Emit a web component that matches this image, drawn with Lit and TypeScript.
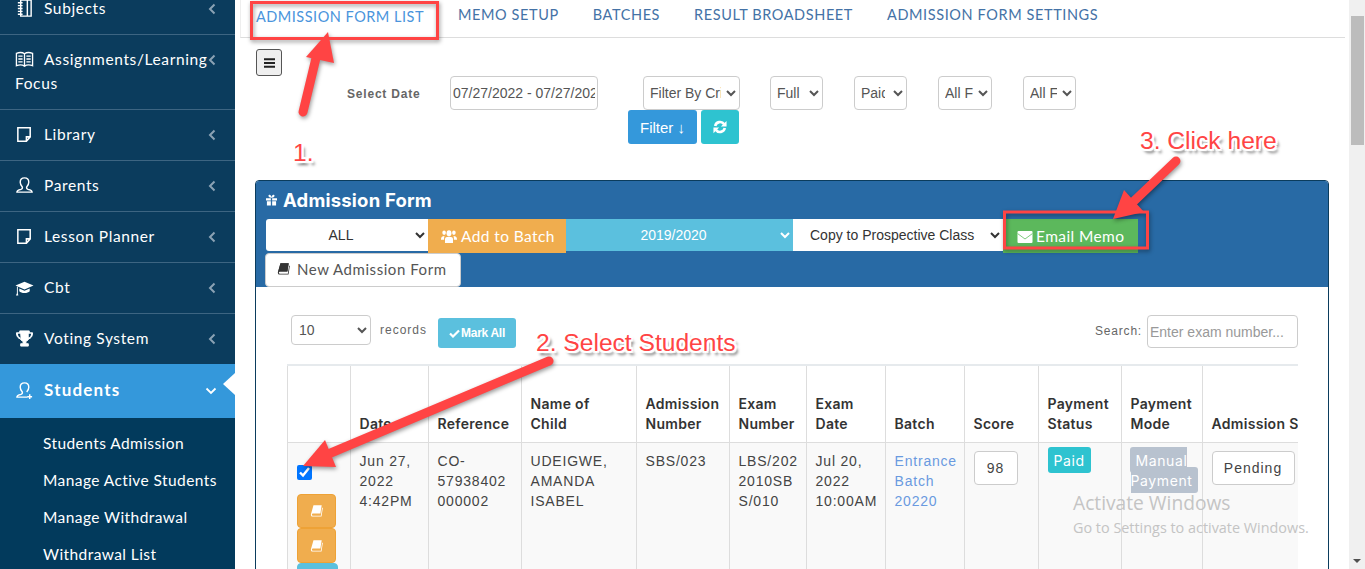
import { LitElement, html, css, svg } from 'lit'
import { customElement } from 'lit/decorators.js'

// line icons for the sidebar, 20x20 box
const icons: Record<string, unknown> = {
	notebook: svg`<path d="M6 1h11v17H6zM13 1v17M3 4h5M3 7h5M3 10h5M3 13h5M3 16h5" fill="none" stroke="#fff" stroke-width="1.5"/>`,
	book: svg`<path d="M10 4C8 2.500 4 2.500 1.500 3.500V16.500C4 15.500 8 15.500 10 17 12 15.500 16 15.500 18.500 16.500V3.500C16 2.500 12 2.500 10 4ZM10 4V17M3.500 6.500h4.500M3.500 9.500h4.500M3.500 12.500h4.500M12 6.500h4.500M12 9.500h4.500M12 12.500h4.500" fill="none" stroke="#fff" stroke-width="1.400"/>`,
	note: svg`<path d="M3 3h13v9.500L12 17H3zM12 17v-4.500h4" fill="none" stroke="#fff" stroke-width="1.600"/>`,
	user: svg`<path d="M10 2c-3 0-4.500 2-4.500 4.500 0 2 1 3.700 2.200 5 .3 1-.2 2-1.500 2.500-2 .7-4.200 1-4.200 3h16c0-2-2.200-2.300-4.200-3-1.300-.5-1.800-1.500-1.500-2.500 1.200-1.300 2.200-3 2.200-5C14.500 4 13 2 10 2Z" fill="none" stroke="#fff" stroke-width="1.500"/>`,
	userPlus: svg`<path d="M10 2c-3 0-4.500 2-4.500 4.500 0 2 1 3.700 2.200 5 .3 1-.2 2-1.500 2.500-2 .7-4.200 1-4.200 3h11M12.300 11.500c1.200-1.300 2.200-3 2.200-5C14.500 4 13 2 10 2M15.500 14v5M13 16.500h5" fill="none" stroke="#fff" stroke-width="1.500"/>`,
	cap: svg`<path d="M10 4 .5 8 10 12l9.500-4ZM4.500 11v3c2 2.500 9 2.500 11 0v-3L10 13.500ZM2 9v7l-1 2.500h2.500L3 16V9.500Z" fill="#fff"/>`,
	trophy: svg`<path d="M5 2h10v6c0 3-2 4.500-3.500 5v2.500H14V18H6v-2.500h2.500V13C7 12.500 5 11 5 8ZM5 4H1.500c0 3.500 1.500 6 4.500 6.500M15 4h3.500c0 3.500-1.500 6-4.500 6.500" fill="#fff" stroke="#fff" stroke-width="1" fill-rule="nonzero"/><path d="M3 5h2.500v4C4 8.500 3.200 7 3 5ZM17 5h-2.500v4c1.500-.5 2.300-2 2.500-4Z" fill="#0b3c5d"/>`,
}

const icon = (name: string) => html`<svg class="nav-icon" viewBox="0 0 20 20">${icons[name]}</svg>`

const chevronLeft = html`<svg class="chev" viewBox="0 0 8 12"><path d="M6.500 1.500 2 6l4.500 4.500" fill="none" stroke="#8ba2b4" stroke-width="2"/></svg>`
const chevronDown = html`<svg class="chev chev-down" viewBox="0 0 12 8"><path d="M1.500 1.500 6 6l4.500-4.500" fill="none" stroke="#fff" stroke-width="1.800"/></svg>`

const bookBtn = svg`<path d="M4 1.500h9.500L12 11H3a1.500 1.500 0 0 0-.8 1.600c.1.500.5.900 1 .9h9.300l1.500-9.500.8.700-1.500 9.800H3C1.500 14.500 1 13.200 1 12Z" fill="#fff"/>`
const bookDark = svg`<path d="M4 1.500h9.500L12 11H3a1.500 1.500 0 0 0-.8 1.600c.1.500.5.900 1 .9h9.300l1.500-9.500.8.700-1.500 9.800H3C1.500 14.500 1 13.200 1 12Z" fill="#333"/><path d="M4 1.500h9.500L12 11H3L1 12Z" fill="#333"/>`

const navItems = [
	{ label: 'Subjects', icon: 'notebook' },
	{ label: 'Assignments/Learning Focus', icon: 'book' },
	{ label: 'Library', icon: 'note' },
	{ label: 'Parents', icon: 'user' },
	{ label: 'Lesson Planner', icon: 'note' },
	{ label: 'Cbt', icon: 'cap' },
	{ label: 'Voting System', icon: 'trophy' },
]

const subItems = ['Students Admission', 'Manage Active Students', 'Manage Withdrawal', 'Withdrawal List']

const tabs = ['MEMO SETUP', 'BATCHES', 'RESULT BROADSHEET', 'ADMISSION FORM SETTINGS']

const colWidths = [63, 78, 93, 115, 93, 77, 79, 79, 74, 83, 81, 120]

@customElement('app-root')
export class AppRoot extends LitElement {
	static styles = css`
		:host {
			display: block;
			position: relative;
			height: 569px;
			overflow: hidden;
			background: #fff;
			font-family: 'Liberation Sans', Arial, sans-serif;
			color: #333;
		}

		.page {
			display: flex;
			width: 1365px;
			height: 569px;
			overflow: hidden;
		}

		/* sidebar */
		.sidebar {
			flex: none;
			width: 235px;
			height: 569px;
			overflow: hidden;
			background: #0b3c5d;
			font-family: Lato, 'Noto Sans', sans-serif;
			color: #fff;
		}

		.nav {
			margin-top: -16px;
		}

		.nav-item {
			position: relative;
			padding: 12px 20px 14px 15px;
			border-bottom: 1px solid #3d6582;
			font-size: 15.500px;
			line-height: 24px;
			letter-spacing: 0.62px;
		}

		.nav-item:nth-child(7) {
			border-bottom: 0;
		}

		.nav-icon {
			display: inline-block;
			width: 19px;
			height: 19px;
			margin-right: 10px;
			vertical-align: -4px;
		}

		.chev {
			position: absolute;
			top: 19px;
			right: 19px;
			width: 8px;
			height: 12px;
		}

		.chev-down {
			top: 23px;
			right: 18px;
			width: 12px;
			height: 8px;
		}

		.nav-item.active {
			height: 54px;
			box-sizing: border-box;
			padding-top: 14px;
			background: #3498db;
			border-bottom: 0;
			font-size: 17px;
			font-weight: 700;
			letter-spacing: 1.2px;
		}

		.notch {
			position: absolute;
			top: 9px;
			right: 0;
			border-style: solid;
			border-width: 11px 12px 11px 0;
			border-color: transparent #fff transparent transparent;
		}

		.sub {
			height: 200px;
			padding-top: 7px;
			background: #023a5c;
			font-size: 15.500px;
		}

		.sub-item {
			padding-left: 43px;
			line-height: 37px;
			letter-spacing: 0.42px;
			white-space: nowrap;
		}

		/* main column */
		.main {
			flex: none;
			width: 1109px;
			margin-left: 5px;
			overflow: hidden;
		}

		.tabs {
			display: flex;
			width: 1104px;
			height: 37px;
			box-sizing: content-box;
			border-bottom: 1px solid #ddd;
			border-left: 1px solid #eee;
			font-family: Lato, 'Noto Sans', sans-serif;
			font-size: 14.500px;
			letter-spacing: 0.6px;
			color: #4472a6;
			white-space: nowrap;
		}

		.tab {
			margin-left: 34px;
			line-height: 29px;
		}

		.tab.current {
			margin-left: 15px;
			line-height: 33px;
			letter-spacing: 0.5px;
			color: #4a94dc;
		}

		.content {
			margin-left: 15px;
		}

		.menu-btn {
			display: flex;
			align-items: center;
			justify-content: center;
			width: 26px;
			height: 27px;
			box-sizing: border-box;
			margin: 11px 0 0 1px;
			padding: 0;
			border: 1px solid #555;
			border-radius: 3px;
			background: #efefef;
		}

		.menu-btn svg {
			width: 11px;
			height: 10px;
		}

		.filters {
			display: flex;
			align-items: center;
			gap: 30px;
			height: 34px;
		}

		.date-label {
			width: 73px;
			margin: 2px 0 0 92px;
			font-size: 12px;
			font-weight: 700;
			letter-spacing: 0.8px;
			color: #666;
			white-space: nowrap;
		}

		.field {
			box-sizing: border-box;
			height: 34px;
			padding: 0 2px;
			border: 1px solid #ccc;
			border-radius: 4px;
			background: #fff;
			font: 14px 'Liberation Sans', Arial, sans-serif;
			color: #555;
		}

		.date {
			width: 148px;
			margin-right: 15px;
		}

		.sel-crit {
			width: 97px;
		}

		.sel-a {
			width: 53px;
		}

		.sel-b {
			width: 53px;
			margin-left: 1px;
			padding-right: 5px;
		}

		.sel-c {
			width: 54px;
			margin-left: 1px;
		}

		.sel-d {
			width: 53px;
			margin-left: 1px;
		}

		.filter-btns {
			display: flex;
			gap: 4px;
			margin-left: 373px;
		}

		.btn {
			display: flex;
			align-items: center;
			justify-content: center;
			height: 34px;
			box-sizing: border-box;
			padding: 0;
			border: 0;
			border-radius: 3px;
			font: 15px 'Liberation Sans', Arial, sans-serif;
			color: #fff;
		}

		.btn-filter {
			width: 69px;
			background: #3498db;
		}

		.btn-refresh {
			width: 38px;
			background: #2ec3d0;
		}

		.btn-refresh svg {
			width: 14px;
			height: 14px;
		}

		/* panel */
		.panel {
			width: 1074px;
			box-sizing: border-box;
			margin-top: 36px;
			border: 1px solid #0b3c5d;
			border-radius: 4px;
			overflow: hidden;
		}

		.panel-head {
			height: 106px;
			box-sizing: border-box;
			padding: 7px 0 0 10px;
			background: #286aa5;
		}

		.panel-title {
			display: flex;
			align-items: center;
			gap: 6px;
			height: 24px;
			margin-bottom: 7px;
			font-family: Inter, Roboto, sans-serif;
			font-size: 18.500px;
			font-weight: 700;
			letter-spacing: 0.2px;
			color: #fff;
		}

		.panel-title svg {
			width: 11px;
			height: 12px;
		}

		.actions {
			display: flex;
			align-items: flex-start;
		}

		.act-select {
			height: 32px;
			box-sizing: border-box;
			border: 0;
			border-radius: 0;
			font: 14px 'Liberation Sans', Arial, sans-serif;
			color: #333;
			background: #fff;
			text-align: center;
		}

		.act-all {
			width: 162px;
			border-radius: 3px 0 0 3px;
		}

		.act-session {
			width: 227px;
			background: #5bc0de;
			color: #fff;
		}

		.act-copy {
			width: 210px;
			padding-left: 13px;
			text-align: left;
		}

		.act-btn {
			display: flex;
			align-items: center;
			gap: 4px;
			height: 34px;
			box-sizing: border-box;
			padding: 0;
			border: 0;
			font-family: Lato, 'Noto Sans', sans-serif;
			font-size: 15.500px;
			letter-spacing: 0.4px;
			color: #fff;
		}

		.act-batch {
			width: 138px;
			padding-left: 13px;
			background: #f0ad4e;
		}

		.act-email {
			width: 135px;
			padding-left: 14px;
			gap: 3px;
			background: #5cb85c;
		}

		.act-btn svg {
			width: 16px;
			height: 15px;
		}

		.act-email svg {
			height: 12px;
			margin-top: 2px;
		}

		.new-form {
			display: flex;
			align-items: center;
			gap: 7px;
			width: 196px;
			height: 34px;
			box-sizing: border-box;
			margin-left: -1px;
			padding: 0 0 3px 11px;
			border: 1px solid #ccc;
			border-radius: 4px;
			background: #fff;
			font-family: Lato, 'Noto Sans', sans-serif;
			font-size: 15px;
			letter-spacing: 0.55px;
			color: #555;
		}

		.new-form svg {
			width: 13px;
			height: 13px;
		}

		.panel-body {
			padding: 28px 30px 0 31px;
			height: 300px;
		}

		.toolbar {
			display: flex;
			align-items: flex-start;
			height: 49px;
			margin-left: 4px;
		}

		.len-select {
			width: 80px;
			height: 30px;
			padding: 0 3px;
		}

		.records {
			margin: 7px 0 0 9px;
			font-size: 12px;
			line-height: 16px;
			letter-spacing: 1px;
			color: #666;
		}

		.mark-all {
			display: flex;
			align-items: center;
			justify-content: center;
			gap: 1px;
			width: 78px;
			height: 30px;
			margin: 3px 0 0 11px;
			padding: 0;
			border: 0;
			border-radius: 3px;
			background: #5bc0de;
			font: 700 12px 'Liberation Sans', Arial, sans-serif;
			letter-spacing: -0.3px;
			color: #fff;
		}

		.mark-all svg {
			width: 11px;
			height: 9px;
		}

		.search {
			display: flex;
			align-items: flex-start;
			gap: 5px;
			margin-left: auto;
			font-size: 12px;
			letter-spacing: 0.8px;
			color: #666;
		}

		.search span {
			margin-top: 9px;
		}

		.search input {
			width: 151px;
			height: 33px;
			letter-spacing: 0;
		}

		.search input::placeholder {
			color: #999;
		}

		.table-wrap {
			width: 1011px;
			overflow: hidden;
			border-top: 2px solid #e6eaed;
		}

		table {
			table-layout: fixed;
			width: 1035px;
			border-collapse: collapse;
		}

		th,
		td {
			box-sizing: border-box;
			padding: 8px 4px 8px 8.500px;
			border: 1px solid #ddd;
			overflow: hidden;
			text-align: left;
			vertical-align: top;
		}

		tr:first-child th {
			border-top: 0;
		}

		th {
			height: 76px;
			vertical-align: bottom;
			font-family: Inter, Roboto, sans-serif;
			font-size: 14px;
			font-weight: 600;
			line-height: 20px;
			letter-spacing: 0.3px;
			color: #333;
		}

		td {
			height: 140px;
			background: #f9f9f9;
			font-size: 14px;
			line-height: 20px;
			letter-spacing: 0.8px;
			color: #444;
			white-space: nowrap;
		}

		th.nowrap {
			white-space: nowrap;
		}

		.check {
			display: block;
			width: 15px;
			height: 15px;
			margin: 14px 0 14px 0;
			accent-color: #0075ff;
		}

		.row-btn {
			display: flex;
			align-items: center;
			justify-content: center;
			width: 39px;
			height: 34.500px;
			padding: 0;
			box-sizing: border-box;
			border: 1px solid #eea236;
			border-radius: 4px;
			background: #f0ad4e;
		}

		.row-btn svg {
			width: 13px;
			height: 13px;
		}

		.row-btn.info {
			width: 41px;
			border-color: #5bc0de;
			background: #5bc0de;
		}

		td.link {
			color: #6a9ae0;
			white-space: normal;
		}

		td.wrap {
			white-space: normal;
		}

		.mini {
			display: block;
			box-sizing: border-box;
			height: 34px;
			border: 1px solid #ccc;
			border-radius: 4px;
			background: #fff;
			font: 14px 'Liberation Sans', Arial, sans-serif;
			letter-spacing: 1px;
			color: #444;
			text-align: center;
			line-height: 32px;
		}

		.score {
			width: 44px;
		}

		.pending {
			width: 83px;
		}

		/* inline labels: padding is sliced across the wrapped lines */
		.label {
			padding: 5px 6px 4px;
			border-radius: 3px;
			font-family: Inter, Roboto, sans-serif;
			font-size: 14px;
			letter-spacing: 0.6px;
			color: #fff;
		}

		.label-paid {
			background: #2ec3d0;
		}

		.label-mode {
			margin-left: -1px;
			background: #b8c2cf;
		}

		/* scrollbar */
		.scrollbar {
			flex: none;
			position: relative;
			width: 16px;
			height: 569px;
			background: #f0f0f0;
		}

		.thumb {
			height: 129px;
			margin: 16px 1px 0 2px;
			background: #bcbcbc;
		}

		.scroll-down {
			position: absolute;
			right: 4px;
			bottom: 6px;
			border-style: solid;
			border-width: 4px 4px 0;
			border-color: #505050 transparent transparent;
		}

		/* annotations drawn over the page */
		.marks {
			position: absolute;
			left: 0;
			top: 0;
			width: 1365px;
			height: 569px;
			pointer-events: none;
			filter: drop-shadow(1px 2px 2px rgba(0, 0, 0, 0.4));
		}

		.callout {
			position: absolute;
			font-family: 'Liberation Sans', Arial, sans-serif;
			font-size: 24.600px;
			line-height: 28px;
			color: #ff4444;
			white-space: nowrap;
			text-shadow:
				-1px -1px 0 #fff,
				1px -1px 0 #fff,
				-1px 1px 0 #fff,
				1px 1px 0 #fff,
				0 -2px 0 #fff,
				0 2px 0 #fff,
				-2px 0 0 #fff,
				2px 0 0 #fff,
				-2px -2px 1px #fff,
				2px 2px 1px #fff,
				2px -2px 1px #fff,
				-2px 2px 1px #fff,
				3px 4px 3px rgba(0, 0, 0, 0.6);
		}

		.c1 {
			left: 293px;
			top: 139px;
		}

		.c2 {
			left: 536px;
			top: 329px;
		}

		.c3 {
			left: 1140px;
			top: 127px;
		}

		.watermark {
			position: absolute;
			left: 1073px;
			top: 490px;
			font-family: 'Open Sans', 'Noto Sans', sans-serif;
			color: #c4c4c4;
			white-space: nowrap;
			pointer-events: none;
		}

		.wm-title {
			font-size: 19.200px;
			line-height: 25px;
		}

		.wm-sub {
			margin-top: 3px;
			font-size: 14.400px;
			line-height: 19px;
		}
	`

	render() {
		return html`
			<div class="page">
				<aside class="sidebar">
					<div class="nav">
						${navItems.map(
							(n) => html`<div class="nav-item">${icon(n.icon)}${n.label}${chevronLeft}</div>`,
						)}
						<div class="nav-item active">
							${icon('userPlus')}Students${chevronDown}<span class="notch"></span>
						</div>
					</div>
					<div class="sub">
						${subItems.map((s) => html`<div class="sub-item">${s}</div>`)}
					</div>
				</aside>

				<main class="main">
					<div class="tabs">
						<div class="tab current">ADMISSION FORM LIST</div>
						${tabs.map((t) => html`<div class="tab">${t}</div>`)}
					</div>

					<div class="content">
						<button class="menu-btn">
							<svg viewBox="0 0 11 10"><path d="M0 1.200h11M0 5h11M0 8.800h11" stroke="#222" stroke-width="2"/></svg>
						</button>

						<div class="filters">
							<div class="date-label">Select Date</div>
							<input class="field date" value="07/27/2022 - 07/27/2022" />
							<select class="field sel-crit"><option>Filter By Criteria</option></select>
							<select class="field sel-a"><option>Full Payment</option></select>
							<select class="field sel-b"><option>Paid Status</option></select>
							<select class="field sel-c"><option>All Forms</option></select>
							<select class="field sel-d"><option>All Forms</option></select>
						</div>

						<div class="filter-btns">
							<button class="btn btn-filter">Filter ↓</button>
							<button class="btn btn-refresh">
								<svg viewBox="0 0 16 16">
									<path d="M2.500 6.800A5.700 5.700 0 0 1 12.800 4.800M13.500 9.200A5.700 5.700 0 0 1 3.200 11.200" fill="none" stroke="#fff" stroke-width="3"/>
									<path d="M15.500 1v6.500H9ZM.500 15V8.500H7Z" fill="#fff"/>
								</svg>
							</button>
						</div>

						<section class="panel">
							<div class="panel-head">
								<div class="panel-title">
									<svg viewBox="0 0 12 12"><path d="M0 4h5.300v2.500H0ZM6.700 4H12v2.500H6.700ZM1 7.300h4.300V12H1ZM6.700 7.300H11V12H6.700ZM3 .5c1.300-1 2.600.3 3 2.500.4-2.200 1.700-3.500 3-2.500 1 .9-.2 3-3 3S2 1.400 3 .5Z" fill="#fff"/></svg>
									Admission Form
								</div>
								<div class="actions">
									<select class="act-select act-all"><option>ALL</option></select>
									<button class="act-btn act-batch">
										<svg viewBox="0 0 18 14" preserveAspectRatio="none"><circle cx="9" cy="4" r="2.800" fill="#fff"/><circle cx="3.500" cy="3.500" r="2" fill="#fff"/><circle cx="14.500" cy="3.500" r="2" fill="#fff"/><path d="M4.500 13V9.500C4.500 8 6 7.300 9 7.300s4.500.7 4.500 2.200V13ZM0 9.500C0 7.500 1.500 6.500 4 6.500 3.500 7.300 3.500 8.500 3.500 10H0ZM18 9.500c0-2-1.500-3-4-3 .5.800.5 2 .5 3.500H18Z" fill="#fff"/></svg>
										Add to Batch
									</button>
									<select class="act-select act-session"><option>2019/2020</option></select>
									<select class="act-select act-copy"><option>Copy to Prospective Class</option></select>
									<button class="act-btn act-email">
										<svg viewBox="0 0 15 12"><rect width="15" height="12" rx="1" fill="#fff"/><path d="M0 2.500 7.500 8 15 2.500" fill="none" stroke="#7ecb7e" stroke-width="1"/></svg>
										Email Memo
									</button>
								</div>
								<button class="new-form">
									<svg viewBox="0 0 15 15">${bookDark}</svg>
									New Admission Form
								</button>
							</div>

							<div class="panel-body">
								<div class="toolbar">
									<select class="field len-select"><option>10</option></select>
									<span class="records">records</span>
									<button class="mark-all">
										<svg viewBox="0 0 11 9"><path d="M1 4.500 4 7.500 10 1.500" fill="none" stroke="#fff" stroke-width="2.200"/></svg>
										Mark All
									</button>
									<label class="search">
										<span>Search:</span>
										<input class="field" placeholder="Enter exam number..." />
									</label>
								</div>

								<div class="table-wrap">
									<table>
										<colgroup>
											${colWidths.map((w) => html`<col style="width:${w}px" />`)}
										</colgroup>
										<thead>
											<tr>
												<th></th>
												<th>Date</th>
												<th>Reference</th>
												<th>Name of<br />Child</th>
												<th>Admission Number</th>
												<th>Exam Number</th>
												<th>Exam Date</th>
												<th>Batch</th>
												<th>Score</th>
												<th>Payment Status</th>
												<th>Payment Mode</th>
												<th class="nowrap">Admission Status</th>
											</tr>
										</thead>
										<tbody>
											<tr>
												<td>
													<input class="check" type="checkbox" checked />
													<button class="row-btn"><svg viewBox="0 0 15 15">${bookBtn}</svg></button>
													<button class="row-btn"><svg viewBox="0 0 15 15">${bookBtn}</svg></button>
													<button class="row-btn info"></button>
												</td>
												<td>Jun 27,<br />2022<br />4:42PM</td>
												<td>CO-<br />57938402<br />000002</td>
												<td>UDEIGWE,<br />AMANDA<br />ISABEL</td>
												<td>SBS/023</td>
												<td>LBS/202<br />2010SB<br />S/010</td>
												<td>Jul 20,<br />2022<br />10:00AM</td>
												<td class="link">Entrance Batch 20220</td>
												<td><span class="mini score">98</span></td>
												<td><span class="label label-paid">Paid</span></td>
												<td class="wrap"><span class="label label-mode">Manual Payment</span></td>
												<td><span class="mini pending">Pending</span></td>
											</tr>
										</tbody>
									</table>
								</div>
							</div>
						</section>
					</div>
				</main>

				<div class="scrollbar">
					<div class="thumb"></div>
					<span class="scroll-down"></span>
				</div>
			</div>

			<div class="watermark">
				<div class="wm-title">Activate Windows</div>
				<div class="wm-sub">Go to Settings to activate Windows.</div>
			</div>

			<svg class="marks" viewBox="0 0 1365 569">
				<rect x="251.500" y="2.500" width="186" height="36" fill="none" stroke="#ff4444" stroke-width="3" />
				<rect x="1004.500" y="212" width="143" height="36" fill="none" stroke="#ff4444" stroke-width="3" />
				<path d="M303 112 316 58" stroke="#ff4444" stroke-width="9" stroke-linecap="round" fill="none" />
				<path d="M328 32 306 57 334 63Z" fill="#ff4444" />
				<path d="M549 361 326 455" stroke="#ff4444" stroke-width="9" stroke-linecap="round" fill="none" />
				<path d="M303 466 325 440 336 467Z" fill="#ff4444" />
				<path d="M1176 161 1133 202" stroke="#ff4444" stroke-width="9" stroke-linecap="round" fill="none" />
				<path d="M1113 219 1124 190 1144 212Z" fill="#ff4444" />
			</svg>
			<div class="callout c1">1.</div>
			<div class="callout c2">2. Select Students</div>
			<div class="callout c3">3. Click here</div>
		`
	}
}
